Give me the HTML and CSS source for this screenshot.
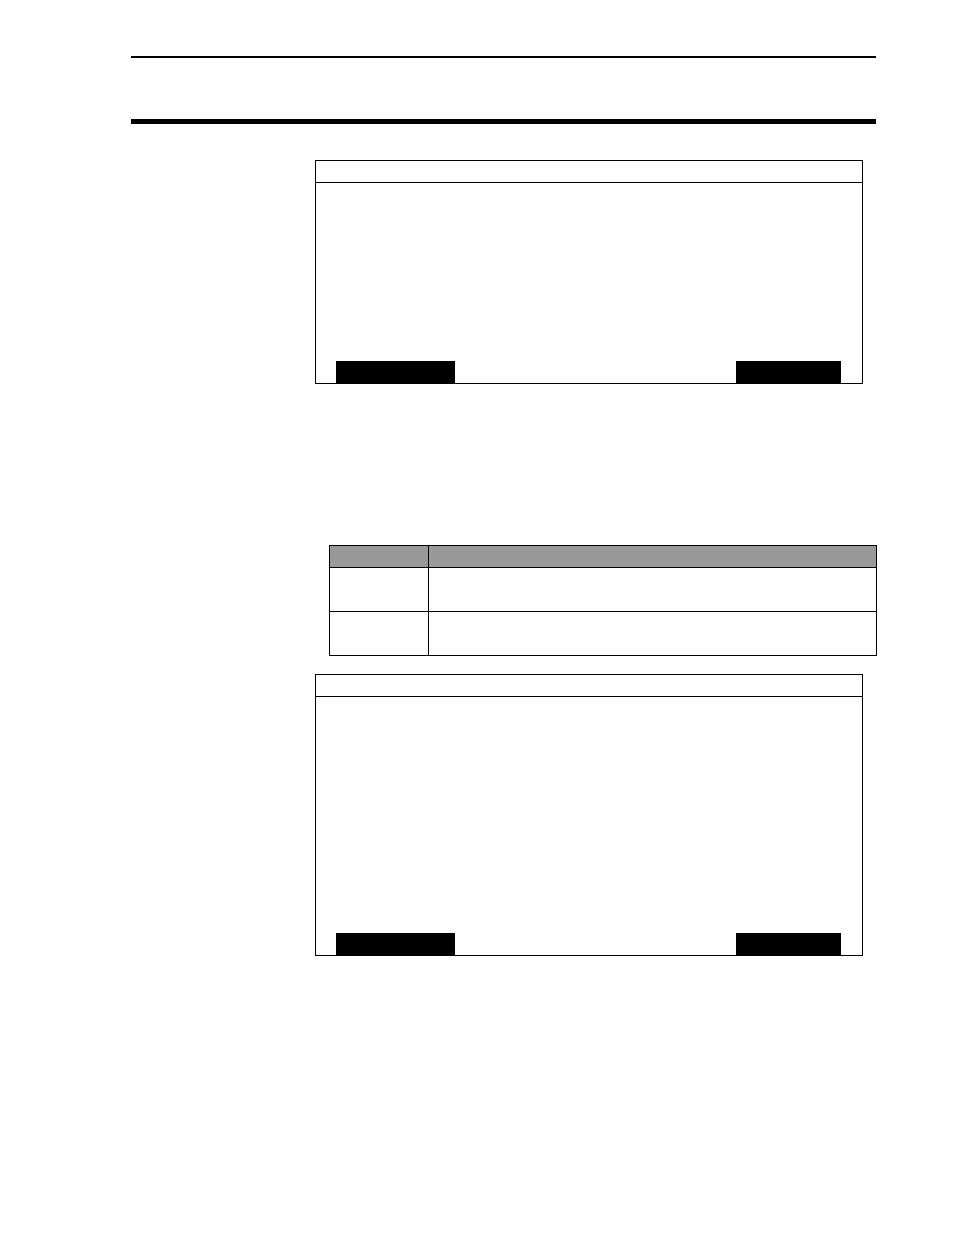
FILE: index.html
```html
<!DOCTYPE html>
<html lang="en">
<head>
<meta charset="UTF-8" />
<meta name="viewport" content="width=device-width, initial-scale=1" />
<title>Manual</title>
<link rel="stylesheet" href="styles.css">
</head>
<body>

<header class="page-header"></header>

<main class="content">
  <section class="screen">
    <div class="screen-title"></div>
    <div class="screen-body"></div>
    <div class="screen-keys">
      <button type="button" class="key key-left" aria-label="Left key"></button>
      <button type="button" class="key key-right" aria-label="Right key"></button>
    </div>
  </section>

  <table class="options">
    <thead>
      <tr>
        <th class="option-name"></th>
        <th></th>
      </tr>
    </thead>
    <tbody>
      <tr>
        <td></td>
        <td></td>
      </tr>
      <tr>
        <td></td>
        <td></td>
      </tr>
    </tbody>
  </table>

  <section class="screen">
    <div class="screen-title"></div>
    <div class="screen-body screen-body-tall"></div>
    <div class="screen-keys">
      <button type="button" class="key key-left" aria-label="Left key"></button>
      <button type="button" class="key key-right" aria-label="Right key"></button>
    </div>
  </section>
</main>

</body>
</html>
```

FILE: styles.css
```css
* {
  box-sizing: border-box;
}
body {
  margin: 0;
  padding: 56px 77px 56px 131px;
  font-family: "Liberation Sans", Arial, sans-serif;
  background: #fff;
  color: #000;
}
.page-header {
  height: 68px;
  margin-right: 1px;
  border-top: 2px solid #000;
  border-bottom: 5px solid #000;
}
.content {
  margin: 36px 0 0 184px;
}

/* display screens */
.screen {
  margin-right: 14px;
  border: 1px solid #000;
}
.screen-title {
  height: 22px;
  border-bottom: 1px solid #000;
}
.screen-body {
  height: 178px;
}
.screen-body-tall {
  height: 236px;
}
.screen-keys {
  display: flex;
  justify-content: space-between;
  padding: 0 21px 0 20px;
}
.key {
  height: 22px;
  padding: 0;
  border: none;
  background: #000;
  color: #fff;
}
.key-left {
  width: 119px;
}
.key-right {
  width: 105px;
}

/* options table */
.options {
  width: calc(100% - 14px);
  margin: 161px 0 18px 14px;
  table-layout: fixed;
  border-collapse: separate;
  border-spacing: 0;
  border-top: 1px solid #000;
  border-left: 1px solid #000;
}
.options th,
.options td {
  height: 44px;
  padding: 0 8px;
  border-right: 1px solid #000;
  border-bottom: 1px solid #000;
  text-align: left;
}
.options th {
  height: 22px;
  background: #999;
}
.options .option-name {
  width: 99px;
}
```
